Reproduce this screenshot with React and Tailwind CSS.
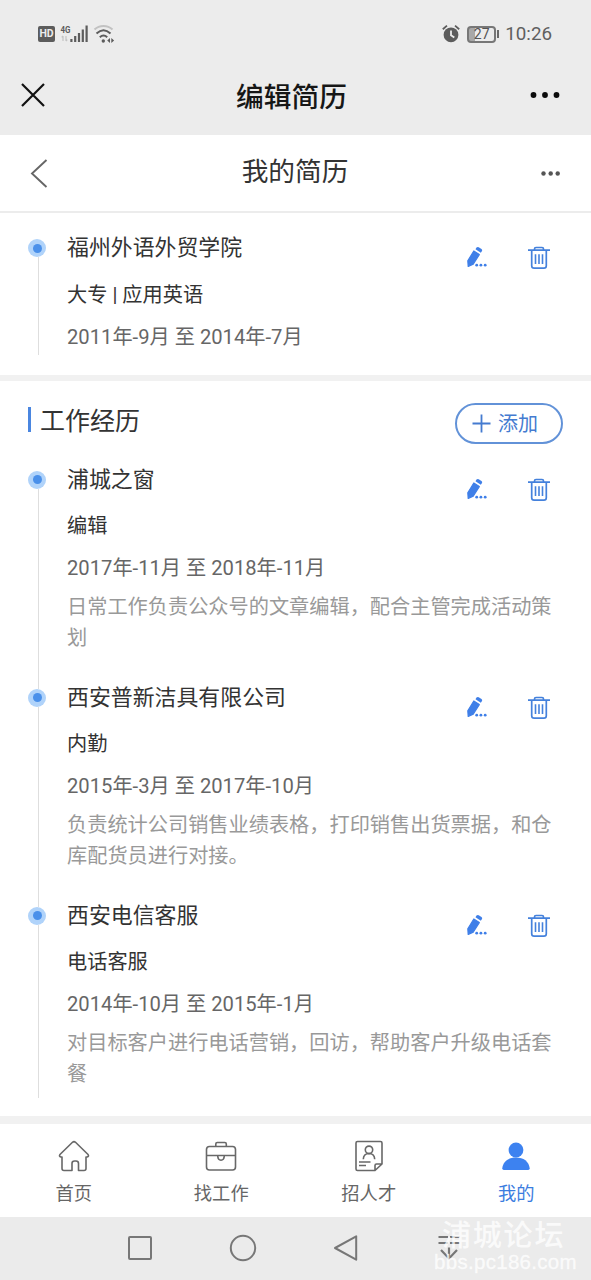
import React from 'react';

const jobs = [
  {
    name: '浦城之窗',
    role: '编辑',
    period: '2017年-11月 至 2018年-11月',
    desc: '日常工作负责公众号的文章编辑，配合主管完成活动策划',
  },
  {
    name: '西安普新洁具有限公司',
    role: '内勤',
    period: '2015年-3月 至 2017年-10月',
    desc: '负责统计公司销售业绩表格，打印销售出货票据，和仓库配货员进行对接。',
  },
  {
    name: '西安电信客服',
    role: '电话客服',
    period: '2014年-10月 至 2015年-1月',
    desc: '对目标客户进行电话营销，回访，帮助客户升级电话套餐',
  },
];

function StatusBar() {
  return (
    <div className="flex h-[68px] items-center justify-between pl-[38px] pr-[39px] text-[#5f5f5f]">
      <div className="flex h-[22px] items-center">
        <span className="flex h-4 w-[17px] items-center justify-center rounded-[2px] bg-[#5c5c5c] text-[10.500px] font-bold leading-none text-[#ececec]">HD</span>
        <svg className="ml-[5px]" width="30" height="20" viewBox="0 0 30 20">
          <text x="0.5" y="8.6" fontSize="9" fontWeight="700" fill="#5c5c5c" textLength="10" lengthAdjust="spacingAndGlyphs">4G</text>
          <path d="M3 12v5M1.700 13.400 3 12M6 12v5M7.300 15.600 6 17" stroke="#c4c4c4" strokeWidth="1.200" fill="none" />
          <path d="M11.400 15v3M15.200 12v6M19 9v9M22.800 5.500v12.500M26.600 1.500v16.500" stroke="#5c5c5c" strokeWidth="2.200" />
        </svg>
        <svg className="ml-[3px]" width="22" height="20" viewBox="0 0 22 20" fill="none">
          <path d="M1.500 5.500C6.500.8 14.500.8 19.500 5.500" stroke="#c2c2c2" strokeWidth="2" />
          <path d="M3.500 9.500C8 5.300 13 5.300 17.500 9.500M6.800 13.300C9.300 11 11.800 11 14.200 13.300" stroke="#5c5c5c" strokeWidth="2" />
          <circle cx="10.300" cy="17" r="1.700" fill="#5c5c5c" />
          <path d="m17 14-2.800 2.500L17 19zM18.300 14l2.800 2.500-2.800 2.500z" fill="#5c5c5c" />
        </svg>
      </div>
      <div className="flex items-center">
        <svg width="20" height="20" viewBox="0 0 20 20" fill="none">
          <circle cx="10" cy="10.800" r="7.400" fill="#5c5c5c" />
          <path d="M1.800 5.200 6 1.600M14 1.600l4.200 3.600" stroke="#5c5c5c" strokeWidth="1.800" />
          <path d="M10 6.500v4.700l3.300 2.300" stroke="#ececec" strokeWidth="1.800" />
        </svg>
        <span className="ml-[6px] flex h-[17px] w-[29px] items-center justify-center rounded-[4px] border-2 border-[#777] bg-linear-to-r from-[#a8a8a8] from-25% to-[#ececec] to-25% text-[14px] leading-none text-[#555]">27</span>
        <span className="ml-[1px] h-2 w-[2px] bg-[#6a6a6a]" />
        <span className="ml-[6px] text-[18.800px] leading-none">10:26</span>
      </div>
    </div>
  );
}

function WindowBar() {
  return (
    <div className="flex h-[67px] items-start justify-between pl-[21px] pr-[30px]">
      <svg className="mt-[15px]" width="24" height="24" viewBox="0 0 24 24">
        <path d="m1 1 22 22M23 1 1 23" stroke="#111" strokeWidth="2.200" />
      </svg>
      <h1 className="pl-[8px] pt-[10px] text-[27.700px] font-medium leading-10 text-[#161616]">编辑简历</h1>
      <svg className="mt-[24px]" width="31" height="6" viewBox="0 0 31 6" fill="#0c0c0c">
        <circle cx="3.500" cy="3" r="2.900" />
        <circle cx="15" cy="3" r="2.900" />
        <circle cx="26.500" cy="3" r="2.900" />
      </svg>
    </div>
  );
}

function PageBar() {
  return (
    <div className="flex h-[78px] shrink-0 items-start justify-between border-b-2 border-[#ececec] bg-white pl-[30px] pr-[31px]">
      <svg className="mt-[24px]" width="18" height="29" viewBox="0 0 18 29" fill="none">
        <path d="M16.500 1 2 14.500 16.500 28" stroke="#666" strokeWidth="1.900" />
      </svg>
      <h2 className="pl-[1px] pt-[17px] text-[26.700px] leading-10 text-[#333]">我的简历</h2>
      <svg className="mt-[36px]" width="19" height="5" viewBox="0 0 19 5" fill="#555">
        <circle cx="2.500" cy="2.500" r="2.200" />
        <circle cx="9.700" cy="2.500" r="2.200" />
        <circle cx="16.700" cy="2.500" r="2.200" />
      </svg>
    </div>
  );
}

function EditIcon() {
  return (
    <svg width="20" height="22" viewBox="0 0 20 22" fill="#3f7fe8">
      <path d="M6.800 5 12.300 8.600 6.200 18.200 1.200 20.500.800 14.800z" stroke="#3f7fe8" strokeWidth="1.200" strokeLinejoin="round" />
      <path d="m8.500 3.200 1-1.600q1-1.100 2.200-.4l2.800 1.700q1.100.8.500 2l-1.200 1.900z" />
      <circle cx="9.700" cy="19.200" r="1.400" />
      <circle cx="13.900" cy="19.200" r="1.400" />
      <circle cx="18.200" cy="19.200" r="1.400" />
    </svg>
  );
}

function TrashIcon() {
  return (
    <svg width="22" height="24" viewBox="0 0 22 24" fill="none" stroke="#4481dc" strokeWidth="1.700">
      <path d="M0 4.200h22M6.500 4.200V3q0-1.500 1.500-1.500h6q1.500 0 1.500 1.500v1.200" />
      <path d="M3.700 4.200v15.600q0 2.400 2.400 2.400h9.800q2.400 0 2.400-2.400V4.200" />
      <path d="M7.500 8.200v9.800M11 8.200v9.800M14.500 8.200v9.800" strokeWidth="1.600" />
    </svg>
  );
}

function Entry({ name, role, period, desc, last }) {
  return (
    <article className="flex">
      <div className="flex w-[18px] shrink-0 flex-col items-center pt-[7px]">
        <span className="flex size-[18px] shrink-0 items-center justify-center rounded-full bg-[#b0d3fa]">
          <span className="size-[9px] rounded-full bg-[#4a90ea]" />
        </span>
        <span className="ml-[2px] w-px flex-1 bg-[#dedede]" />
        {!last && <span className="-mb-[7px] ml-[2px] h-[7px] w-px bg-[#dedede]" />}
      </div>
      <div className={last ? 'min-w-0 flex-1 pb-[8px] pl-[21px] pt-[1px]' : 'min-w-0 flex-1 pb-[28.300px] pl-[21px] pt-[1px]'}>
        <div className="flex h-[46.500px] items-start justify-between pr-[13px]">
          <h3 className="text-[21.900px] leading-[30px] text-[#333]">{name}</h3>
          <div className="flex gap-[41px] pt-[13px]">
            <EditIcon />
            <TrashIcon />
          </div>
        </div>
        <p className="text-[20.200px] leading-[30px] text-[#333]">{role}</p>
        <p className="mt-[12px] text-[20.200px] leading-[30px] text-[#666]">{period}</p>
        {desc && <p className="mt-[8.300px] w-[492px] text-[20.200px] leading-[31px] text-[#999]">{desc}</p>}
      </div>
    </article>
  );
}

const tabs = [
  {
    label: '首页',
    icon: (
      <path d="M11.500 30.500H6q-2 0-2-2V17H3q-2.500-.7-.8-2.800L14.500 2.300q1.500-1.300 3 0l12.300 11.900q1.700 2.100-.8 2.800h-1v11.500q0 2-2 2h-5.500v-7q0-2.500-2.500-2.500h-1.500q-2.500 0-2.500 2.500v7z" />
    ),
  },
  {
    label: '找工作',
    icon: (
      <>
        <rect x="1.500" y="6.500" width="29" height="23.500" rx="3" />
        <path d="M10.800 6.500V4q0-1.500 1.500-1.500h7.500q1.500 0 1.500 1.500v2.500M1.500 15.500h29M12.800 15.500v1.200q.3 3.300 3.200 3.500 2.900-.2 3.200-3.500v-1.200" />
      </>
    ),
  },
  {
    label: '招人才',
    icon: (
      <>
        <path d="M22 30.500H4.500q-1.500 0-1.500-1.500V3q0-1.500 1.500-1.500h23Q29 1.500 29 3v21zV25.500q0-1.500 1.500-1.500H29" />
        <circle cx="16" cy="9.800" r="3.700" />
        <path d="M10.300 19.200q.2-5.500 5.700-5.700 5.500.2 5.700 5.700M6 22h11.500M6 25.500h7" />
      </>
    ),
  },
  {
    label: '我的',
    active: true,
    icon: (
      <g fill="#3d82f0" stroke="none">
        <circle cx="16" cy="10" r="7.400" />
        <path d="M2.300 28.300C3 21.500 8.500 17.500 16 17.500s13 4 13.700 10.800q0 1.700-1.500 1.700H3.800q-1.500 0-1.500-1.700z" />
      </g>
    ),
  },
];

function TabBar() {
  return (
    <nav className="grid h-[93px] shrink-0 grid-cols-4 bg-white pr-[1px]">
      {tabs.map((t) => (
        <div key={t.label} className="flex flex-col items-center pt-[16px]">
          <svg width="32" height="32" viewBox="0 0 32 32" fill="none" stroke="#686868" strokeWidth="1.600" strokeLinejoin="round">
            {t.icon}
          </svg>
          <span className={t.active ? 'mt-[9px] text-[18.300px] leading-[26px] text-[#3b7de0]' : 'mt-[9px] text-[18.300px] leading-[26px] text-[#666]'}>{t.label}</span>
        </div>
      ))}
    </nav>
  );
}

function SystemNav() {
  return (
    <div className="relative h-[63px] shrink-0 bg-[#ebebeb] pl-[126px] pt-[17px]">
      <div className="flex items-center gap-[75px]">
        <svg width="28" height="28" viewBox="0 0 28 28" fill="none" stroke="#777" strokeWidth="2">
          <rect x="3" y="3" width="22" height="22" rx="1" />
        </svg>
        <svg width="28" height="28" viewBox="0 0 28 28" fill="none" stroke="#777" strokeWidth="2">
          <circle cx="14" cy="14" r="12.200" />
        </svg>
        <svg width="28" height="28" viewBox="0 0 28 28" fill="none" stroke="#777" strokeWidth="2" strokeLinejoin="round">
          <path d="M3 14 24.200 2.300v23.400z" />
        </svg>
        <svg width="28" height="28" viewBox="0 0 28 28" fill="none" stroke="#777" strokeWidth="2.200">
          <path d="M3.500 3H13M15 3h9.500M3.500 9H13M15 9h9.500M14 13.500v11M6 16l8 8.500 8-8.500" />
        </svg>
      </div>
      <div className="absolute left-[434px] top-0 w-[150px] text-[#ffffffc4]">
        <div className="pl-[8px] pt-[1px] text-[29px] font-medium leading-[37px] tracking-[1.800px]">浦城论坛</div>
        <div className="font-['Liberation_Sans'] text-[20.500px] font-medium leading-[14px] tracking-[0.300px] [-webkit-text-stroke:0.4px_#ffffffa0]">bbs.pc186.com</div>
      </div>
    </div>
  );
}

export default function App() {
  return (
    <div className="flex h-[1280px] w-[591px] flex-col overflow-hidden bg-white font-[Roboto,'Noto_Sans_CJK_SC',sans-serif]">
      <header className="shrink-0 bg-[#ececec]">
        <StatusBar />
        <WindowBar />
      </header>
      <PageBar />
      <main className="min-h-0 flex-1">
        <section className="px-[28px] pb-[20px] pt-[19px]">
          <div className="h-[123px] overflow-hidden">
            <Entry name="福州外语外贸学院" role="大专 | 应用英语" period="2011年-9月 至 2014年-7月" last />
          </div>
        </section>
        <div className="h-[6px] bg-[#f1f1f1]" />
        <section className="px-[28px] pt-[22px]">
          <div className="flex h-[60.800px] items-start justify-between">
            <div className="flex items-start gap-[9px] pt-[2px]">
              <span className="mt-[2px] h-[25px] w-[3px] bg-[#4a86e0]" />
              <h3 className="pt-[1px] text-[25px] leading-[32px] text-[#333]">工作经历</h3>
            </div>
            <button className="flex h-[41px] w-[108px] items-center gap-[7px] rounded-full border-2 border-[#6292d8] pl-[15px] text-[20px] text-[#447bd0]">
              <svg width="19" height="19" viewBox="0 0 19 19">
                <path d="M9.500.5v18M.5 9.500h18" stroke="#447bd0" strokeWidth="1.800" />
              </svg>
              添加
            </button>
          </div>
          {jobs.map((job, i) => (
            <Entry key={job.name} {...job} last={i === jobs.length - 1} />
          ))}
        </section>
      </main>
      <div className="h-[8px] shrink-0 bg-[#f1f1f1]" />
      <TabBar />
      <SystemNav />
    </div>
  );
}
